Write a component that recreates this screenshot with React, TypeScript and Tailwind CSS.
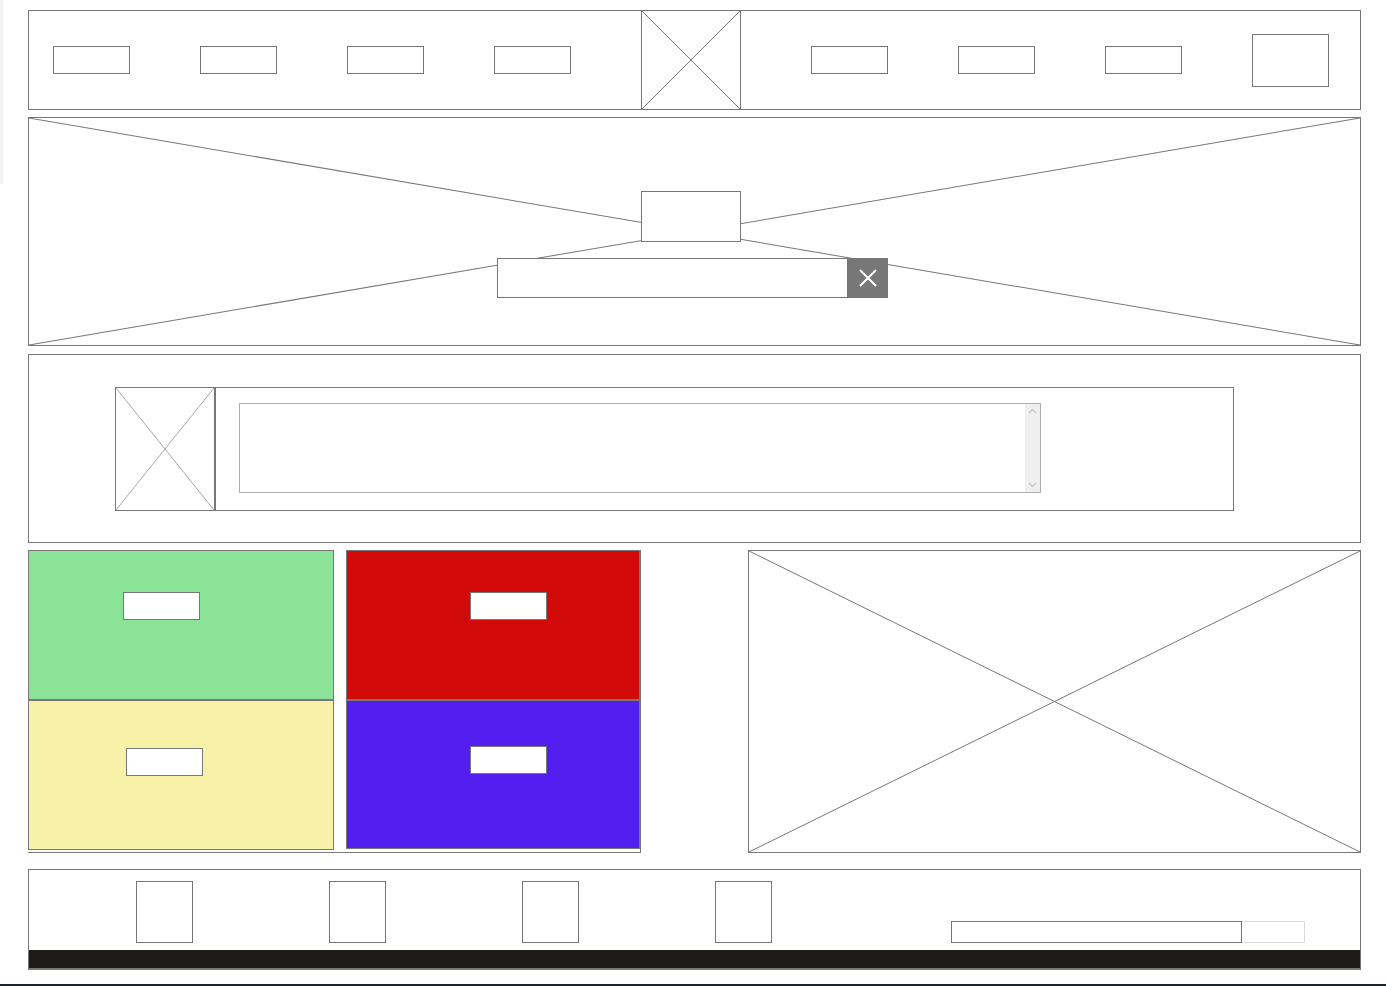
import React from "react";

const XLines = ({ color = "#777" }: { color?: string }) => (
  <svg
    className="absolute inset-0 w-full h-full pointer-events-none"
    preserveAspectRatio="none"
    viewBox="0 0 100 100"
  >
    <line x1="0" y1="0" x2="100" y2="100" stroke={color} strokeWidth="1" vectorEffect="non-scaling-stroke" />
    <line x1="100" y1="0" x2="0" y2="100" stroke={color} strokeWidth="1" vectorEffect="non-scaling-stroke" />
  </svg>
);

const NavRect = () => <div className="w-[77px] h-[28px] border border-[#777] bg-white shrink-0" />;
const Label = () => <div className="w-[77px] h-[28px] border border-[#777] bg-white" />;

export default function App() {
  return (
    <div className="relative w-[1386px] h-[986px] bg-white overflow-hidden" style={{ fontFamily: '"Liberation Sans", Arial, sans-serif' }}>
      <div className="absolute left-0 top-0 w-[3px] h-[184px] bg-[#f2f2f2]" />
      <div className="flex flex-col pl-[28px] pt-[10px]">
        {/* Header */}
        <div className="w-[1333px] h-[100px] border border-[#777] flex items-center">
          <div className="flex items-center gap-[70px] ml-[24px]">
            <NavRect />
            <NavRect />
            <NavRect />
            <NavRect />
            <div className="relative w-[100px] self-stretch -my-px border border-[#777] h-[100px]">
              <XLines />
            </div>
            <NavRect />
            <NavRect />
            <NavRect />
            <div className="w-[77px] h-[53px] border border-[#777]" />
          </div>
        </div>

        {/* Hero */}
        <div className="relative mt-[7px] w-[1333px] h-[229px] border border-[#777]">
          <XLines />
          <div className="relative flex flex-col pt-[73px]">
            <div className="ml-[612px] w-[100px] h-[51px] border border-[#777] bg-white" />
            <div className="ml-[468px] mt-[16px] flex">
              <div className="w-[351px] h-[40px] border border-[#777] bg-white" />
              <div className="w-[40px] h-[40px] bg-[#777] flex items-center justify-center">
                <svg width="18" height="18" viewBox="0 0 18 18">
                  <path d="M1 1 L17 17 M17 1 L1 17" stroke="#fff" strokeWidth="2" />
                </svg>
              </div>
            </div>
          </div>
        </div>

        {/* Section 3 */}
        <div className="mt-[8px] w-[1333px] h-[189px] border border-[#777] pt-[32px]">
          <div className="ml-[86px] w-[1119px] h-[124px] border border-[#777] flex">
            <div className="relative w-[100px] h-full border-r-2 border-[#777]">
              <XLines color="#a8a8a8" />
            </div>
            <div className="ml-[23px] mt-[15px] w-[802px] h-[90px] border border-[#adadad] flex justify-end">
              <div className="w-[15px] h-full bg-[#efefef] flex flex-col items-center justify-between py-[4px]">
                <svg width="9" height="6" viewBox="0 0 9 6">
                  <path d="M1 5 L4.5 1.5 L8 5" stroke="#c4c4c4" strokeWidth="1.3" fill="none" />
                </svg>
                <svg width="9" height="6" viewBox="0 0 9 6">
                  <path d="M1 1 L4.5 4.5 L8 1" stroke="#c4c4c4" strokeWidth="1.3" fill="none" />
                </svg>
              </div>
            </div>
          </div>
        </div>

        {/* Section 4 */}
        <div className="mt-[7px] flex">
          <div className="w-[613px] h-[303px] border-r border-b border-[#777] flex gap-[12px]">
            <div className="w-[307px] flex flex-col">
              <div className="h-[151px] border border-b-2 border-[#777] bg-[#8ae396] pt-[41px] pl-[94px]">
                <Label />
              </div>
              <div className="h-[149px] border-x border-b border-[#777] bg-[#f7f2a7] pt-[47px] pl-[97px]">
                <Label />
              </div>
            </div>
            <div className="w-[294px] flex flex-col">
              <div className="h-[151px] border border-b-2 border-[#777] bg-[#d20a0a] pt-[41px] pl-[123px]">
                <Label />
              </div>
              <div className="h-[148px] border-x border-b border-[#777] bg-[#521ff0] pt-[45px] pl-[123px]">
                <Label />
              </div>
            </div>
          </div>
          <div className="relative ml-[107px] w-[613px] h-[303px] border border-[#777]">
            <XLines />
          </div>
        </div>

        {/* Footer */}
        <div className="mt-[16px] w-[1333px] border-x border-t border-b-2 border-[#777] flex flex-col">
          <div className="h-[80px] flex items-start">
            <div className="ml-[107px] mt-[11px] flex gap-[136px]">
              <div className="w-[57px] h-[62px] border border-[#777]" />
              <div className="w-[57px] h-[62px] border border-[#777]" />
              <div className="w-[57px] h-[62px] border border-[#777]" />
              <div className="w-[57px] h-[62px] border border-[#777]" />
            </div>
            <div className="ml-[179px] mt-[51px] flex">
              <div className="w-[291px] h-[22px] border border-[#777]" />
              <div className="w-[63px] h-[22px] border border-[#dcdcdc] border-l-0" />
            </div>
          </div>
          <div className="h-[18px] bg-[#1f1b1b]" />
        </div>
      </div>
      <div className="absolute left-0 top-[984px] w-full h-[2px] bg-[#1d232a]" />
    </div>
  );
}
